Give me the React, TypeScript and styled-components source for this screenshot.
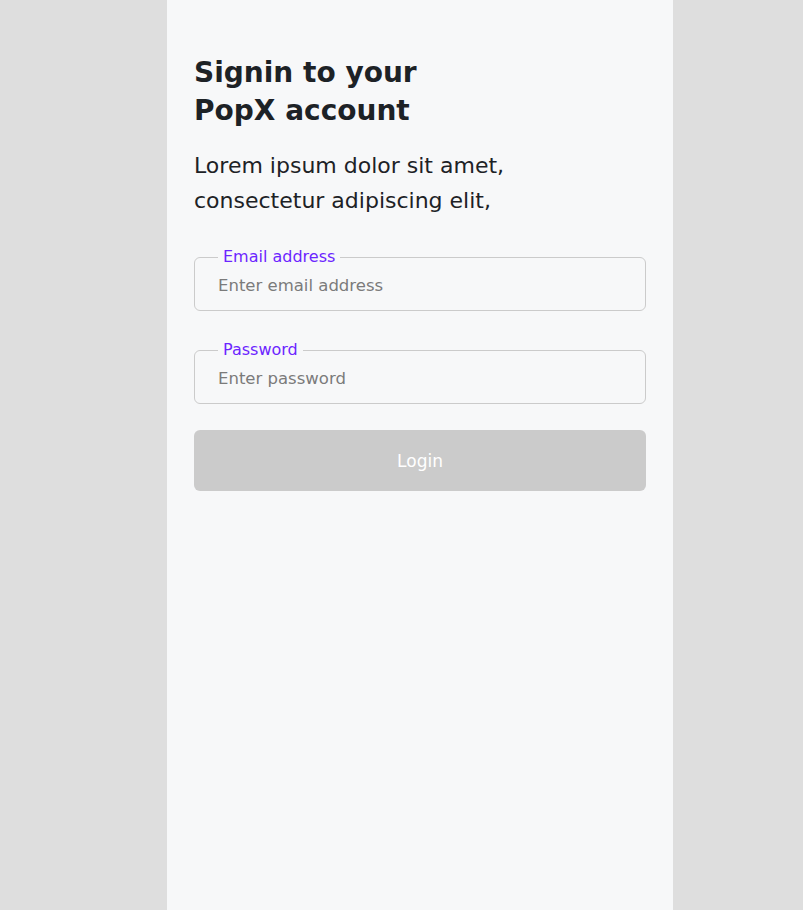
import React from "react";
import styled, { createGlobalStyle } from "styled-components";

const Global = createGlobalStyle`
  html, body { margin: 0; padding: 0; background: #dedede; }
  body { font-family: "DejaVu Sans", "Noto Sans", sans-serif; }
  * { box-sizing: border-box; }
`;

const Page = styled.div`
  display: flex;
  min-height: 910px;
  padding-left: 167px;
`;

const Panel = styled.main`
  width: 506px;
  min-height: 910px;
  background: #f7f8f9;
  padding: 54px 27px 0;
  display: flex;
  flex-direction: column;
`;

const Title = styled.h1`
  margin: 0;
  font-size: 28px;
  line-height: 38px;
  font-weight: 700;
  color: #1d2226;
`;

const Intro = styled.p`
  margin: 18px 0 30px;
  font-size: 22px;
  line-height: 35px;
  color: #1d2226;
`;

const Field = styled.fieldset`
  margin: 0 0 30px;
  padding: 0 22px 6px 23px;
  border: 1px solid #cbcbcb;
  border-radius: 6px;
`;

const Legend = styled.legend`
  padding: 0 5px;
  font-size: 16px;
  line-height: 18px;
  color: #6c25ff;
`;

const Input = styled.input`
  display: block;
  border: none;
  outline: none;
  background: transparent;
  width: 100%;
  height: 38px;
  padding: 0;
  font-family: inherit;
  font-size: 16.5px;
  color: #1d2226;
  &::placeholder { color: #7b7b7b; }
`;

const Button = styled.button`
  margin-top: -4px;
  height: 61px;
  border: none;
  border-radius: 6px;
  background: #cbcbcb;
  color: #ffffff;
  font-family: inherit;
  font-size: 17px;
  font-weight: 500;
`;

export default function App() {
  return (
    <>
      <Global />
      <Page>
        <Panel>
          <Title>
            Signin to your
            <br />
            PopX account
          </Title>
          <Intro>
            Lorem ipsum dolor sit amet,
            <br />
            consectetur adipiscing elit,
          </Intro>
          <Field>
            <Legend>Email address</Legend>
            <Input type="email" placeholder="Enter email address" />
          </Field>
          <Field>
            <Legend>Password</Legend>
            <Input type="password" placeholder="Enter password" />
          </Field>
          <Button disabled>Login</Button>
        </Panel>
      </Page>
    </>
  );
}
